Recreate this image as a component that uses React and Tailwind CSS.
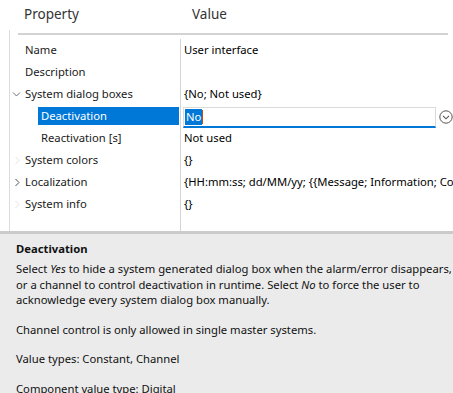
import React from 'react';

const rows = [
  { name: 'Name', value: 'User interface' },
  { name: 'Description', value: '' },
  { name: 'System dialog boxes', value: '{No; Not used}', chevron: 'down' },
  { name: 'Deactivation', value: 'No', child: true, selected: true },
  { name: 'Reactivation [s]', value: 'Not used', child: true },
  { name: 'System colors', value: '{}', chevron: 'faint' },
  { name: 'Localization', value: '{HH:mm:ss; dd/MM/yy; {{Message; Information; Confirmation}}}', chevron: 'right' },
  { name: 'System info', value: '{}', chevron: 'faint' },
];

const Chevron = ({ kind }) => {
  if (kind === 'down') {
    return (
      <svg width="9" height="9" viewBox="0 0 9 9" className="absolute left-[2px] top-[7px]">
        <path d="M1 2.5 L4.5 6 L8 2.5" fill="none" stroke="#707070" strokeWidth="1" />
      </svg>
    );
  }
  return (
    <svg width="9" height="9" viewBox="0 0 9 9" className="absolute left-[3px] top-[7px]">
      <path d="M2.5 1 L6 4.5 L2.5 8" fill="none" stroke={kind === 'right' ? '#505050' : '#e2e2e2'} strokeWidth="1" />
    </svg>
  );
};

const DropIcon = () => (
  <svg width="14" height="14" viewBox="0 0 14 14">
    <circle cx="7" cy="7" r="6.2" fill="none" stroke="#555" strokeWidth="1" />
    <path d="M4 5.8 L7 8.8 L10 5.8" fill="none" stroke="#555" strokeWidth="1.1" />
  </svg>
);

const PropRow = ({ row }) => (
  <div className="flex h-[22px]">
    <div className="relative w-[171px] shrink-0 border-r border-[#d4d4d4]">
      {row.chevron && <Chevron kind={row.chevron} />}
      {row.selected ? (
        <div className="absolute left-[28px] right-[1px] top-[2px] h-[18px] bg-[#0078d7] text-white pl-[3px] leading-[18px]">
          {row.name}
        </div>
      ) : (
        <div className={`leading-[22px] text-[#1a1a1a] ${row.child ? 'pl-[31px]' : 'pl-[15px]'}`}>{row.name}</div>
      )}
    </div>
    <div className="flex-1 min-w-0 relative">
      {row.selected ? (
        <div className="flex items-center h-full pl-[2px]">
          <div className="w-[254px] h-[21px] mt-[2px] border border-[#dadada] border-b-2 border-b-[#0078d7] bg-white flex items-center pl-[1px]">
            <span className="bg-[#0078d7] text-white leading-[16px] px-[1px]">No</span>
            <span className="w-px h-[14px] bg-[#c05010]" />
          </div>
          <div className="ml-[3px] mt-[2px]">
            <DropIcon />
          </div>
        </div>
      ) : (
        <div className="pl-[3px] leading-[22px] whitespace-nowrap overflow-hidden text-black">{row.value}</div>
      )}
    </div>
  </div>
);

export default function App() {
  return (
    <div className="w-[453px] h-[393px] overflow-hidden bg-white flex flex-col text-[11.25px]" style={{ fontFamily: '"Noto Sans", "Open Sans", sans-serif' }}>
      {/* Header */}
      <div className="h-[30px] flex items-start pt-[4px] shrink-0 text-[13.5px] leading-[20px] text-[#333]">
        <div className="pl-[24px] w-[192px]">Property</div>
        <div>Value</div>
      </div>

      {/* Grid */}
      <div className="ml-[9px] flex-1 flex flex-col border-l border-[#dcdcdc] min-h-0">
        <div className="pt-[3px]">
          <div className="ml-[8px] w-[430px] h-[2px] bg-[#d3d3d3]" />
        </div>
        <div className="mt-[4px]">
          {rows.map((row) => (
            <PropRow key={row.name} row={row} />
          ))}
        </div>
        <div className="flex-1 flex">
          <div className="w-[171px] border-r border-[#d4d4d4]" />
        </div>
      </div>

      {/* Description pane */}
      <div className="h-[162px] shrink-0 bg-[#ebebeb] border-t-[3px] border-[#cbcbcb] pl-[16px] pt-[6px] text-[#111] whitespace-nowrap">
        <div className="font-bold leading-[18px]">Deactivation</div>
        <div className="mt-[3px] leading-[15.5px]">
          Select <i>Yes</i> to hide a system generated dialog box when the alarm/error disappears,
          <br />
          or a channel to control deactivation in runtime. Select <i>No</i> to force the user to
          <br />
          acknowledge every system dialog box manually.
        </div>
        <div className="mt-[14px] leading-[15.5px]">Channel control is only allowed in single master systems.</div>
        <div className="mt-[14px] leading-[15.5px]">Value types: Constant, Channel</div>
        <div className="mt-[14.5px] leading-[15.5px]">Component value type: Digital</div>
      </div>
    </div>
  );
}
